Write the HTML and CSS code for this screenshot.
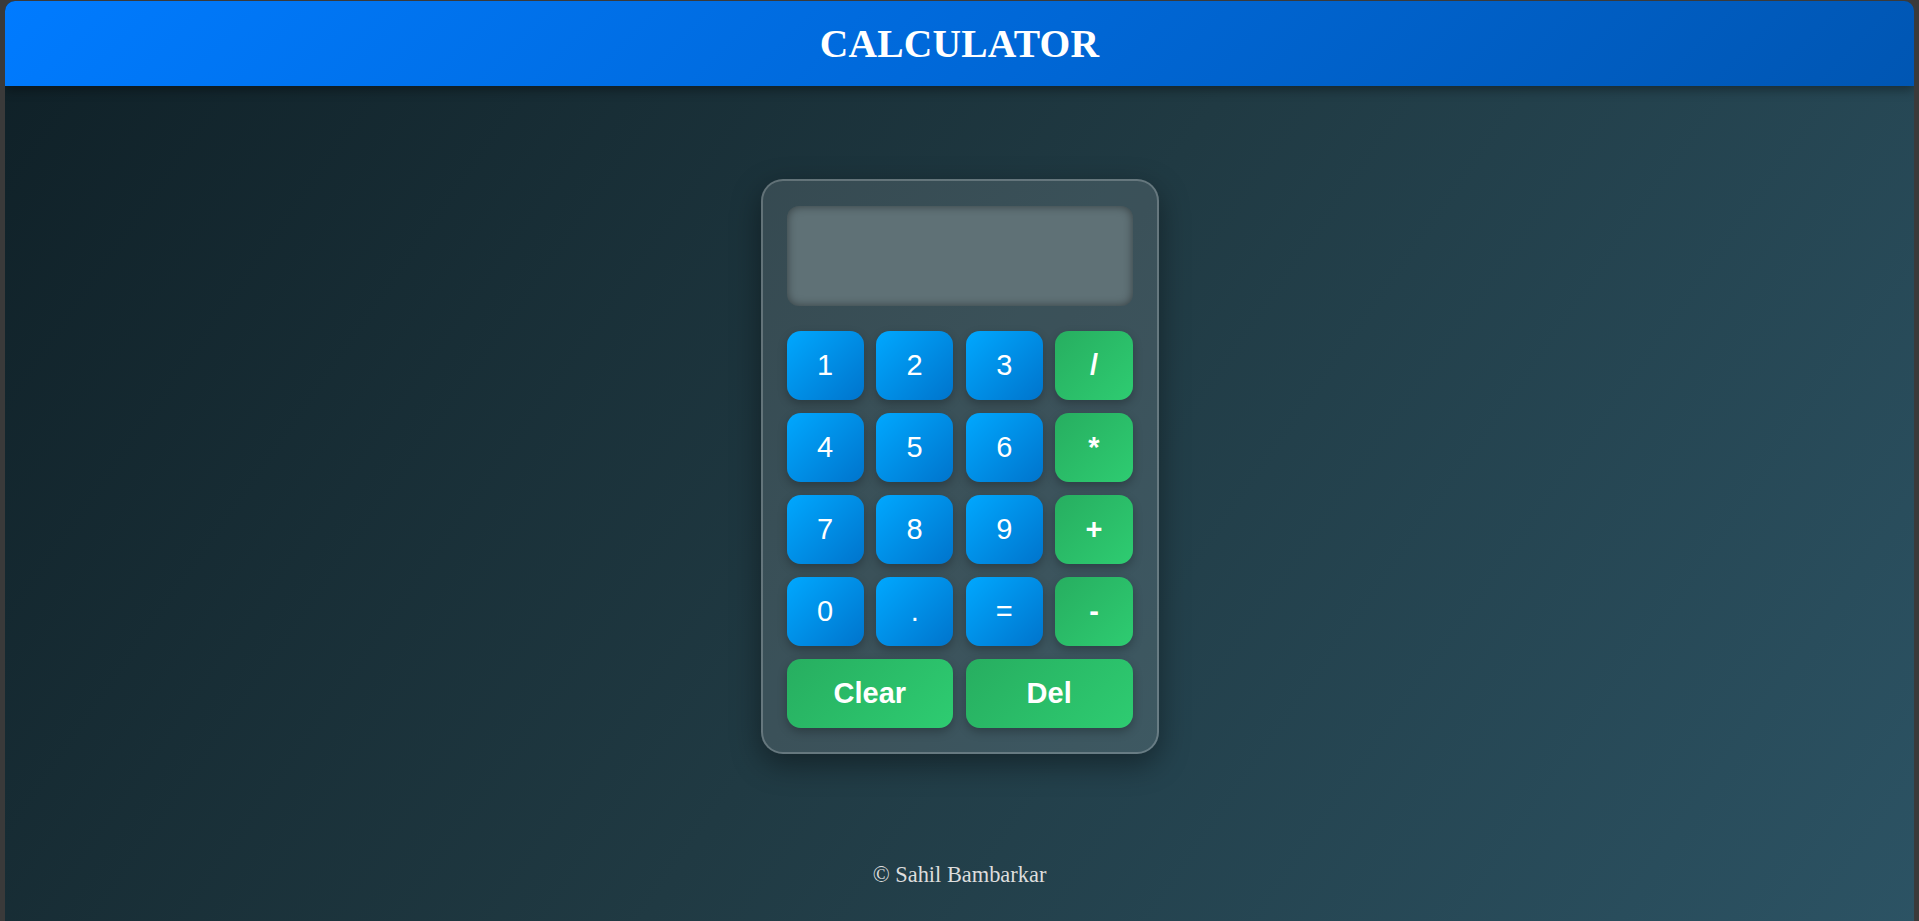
FILE: index.html
```html
<!DOCTYPE html>
<html lang="en">
<head>
<meta charset="UTF-8">
<title>Calculator</title>
<link rel="stylesheet" href="styles.css">
</head>
<body>
<div class="page">
  <header class="topbar">
    <h1 class="title">CALCULATOR</h1>
  </header>
  <main class="main">
    <div class="calc">
      <div class="display"></div>
      <div class="keys">
        <button class="key num">1</button>
        <button class="key num">2</button>
        <button class="key num">3</button>
        <button class="key op">/</button>
        <button class="key num">4</button>
        <button class="key num">5</button>
        <button class="key num">6</button>
        <button class="key op">*</button>
        <button class="key num">7</button>
        <button class="key num">8</button>
        <button class="key num">9</button>
        <button class="key op">+</button>
        <button class="key num">0</button>
        <button class="key num">.</button>
        <button class="key num">=</button>
        <button class="key op">-</button>
        <button class="key op wide">Clear</button>
        <button class="key op wide">Del</button>
      </div>
    </div>
  </main>
  <footer class="footer">&copy; Sahil Bambarkar</footer>
</div>
</body>
</html>
```

FILE: styles.css
```css
html, body {
  margin: 0;
  height: 100%;
}
body {
  background: #3a3a3a;
  padding: 1px 5px 0 5px;
  box-sizing: border-box;
  overflow: hidden;
}
.page {
  height: 940px;
  border-radius: 10px 10px 0 0;
  overflow: hidden;
  background: linear-gradient(125deg, #0f2027 0%, #203a43 50%, #2c5364 100%);
  display: flex;
  flex-direction: column;
  font-family: "Liberation Serif", "Times New Roman", serif;
}
.topbar {
  height: 85px;
  flex: none;
  background: linear-gradient(135deg, #007bff, #0056b3);
  box-shadow: 0 4px 10px rgba(0, 0, 0, 0.35);
  display: flex;
  align-items: center;
  justify-content: center;
  position: relative;
  z-index: 1;
}
.title {
  margin: 0;
  color: #fff;
  font-size: 39.5px;
  font-weight: bold;
  letter-spacing: 0.2px;
}
.main {
  display: flex;
  justify-content: center;
  padding-top: 93px;
}
.calc {
  width: 346px;
  padding: 25px 24px 24px;
  border: 2px solid rgba(255, 255, 255, 0.22);
  border-radius: 22px;
  background: rgba(255, 255, 255, 0.12);
  box-shadow: 0 10px 30px rgba(0, 0, 0, 0.4);
}
.display {
  height: 100px;
  border-radius: 12px;
  background: #5f7176;
  box-shadow: inset 0 0 10px rgba(0, 0, 0, 0.45);
  margin-bottom: 25px;
}
.keys {
  display: grid;
  grid-template-columns: repeat(4, 1fr);
  grid-auto-rows: 69px;
  gap: 13px 12.67px;
}
.key {
  border: none;
  border-radius: 14px;
  color: #fff;
  font-family: "Liberation Sans", Arial, sans-serif;
  font-size: 29px;
  padding: 0;
  box-shadow: 0 4px 10px rgba(0, 0, 0, 0.25);
  cursor: pointer;
}
.num {
  background: linear-gradient(135deg, #00a8ff, #0074cc);
}
.op {
  background: linear-gradient(135deg, #27ae60, #2ecc71);
  font-weight: bold;
}
.wide {
  grid-column: span 2;
}
.footer {
  text-align: center;
  color: #dddddd;
  font-size: 22.4px;
  margin-top: 108px;
}
```
